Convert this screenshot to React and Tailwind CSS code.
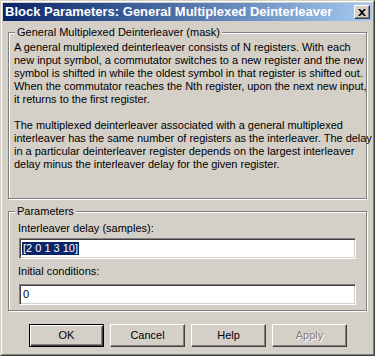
const font = { fontFamily: '"Liberation Sans", Arial, sans-serif' };

const GroupBox = ( { label, className, children } ) => (
	<div
		className={ `relative border border-[#808080] shadow-[inset_1px_1px_0_#fff,1px_1px_0_#fff] ${ className }` }
	>
		<span className="absolute -top-[7px] left-[6px] bg-[#d4d0c8] px-[2px] leading-[13px]">
			{ label }
		</span>
		{ children }
	</div>
);

const EditBox = ( { children } ) => (
	<div className="h-[21px] w-[337px] bg-white border border-t-[#808080] border-l-[#808080] border-b-white border-r-white shadow-[inset_1px_1px_0_#404040,inset_-1px_-1px_0_#d4d0c8] flex items-center pl-[2px] leading-[13px]">
		{ children }
	</div>
);

const Button = ( { children, primary, disabled } ) => (
	<button
		className={ `w-[75px] h-[23px] flex items-center justify-center bg-[#d4d0c8] ${
			primary
				? 'border border-black shadow-[inset_1px_1px_0_#fff,inset_-1px_-1px_0_#404040,inset_-2px_-2px_0_#808080]'
				: 'border border-t-white border-l-white border-b-[#404040] border-r-[#404040] shadow-[inset_-1px_-1px_0_#808080]'
		} ${ disabled ? 'text-[#808080] [text-shadow:1px_1px_0_#fff]' : 'text-black' }` }
	>
		{ children }
	</button>
);

const para1 = [
	'A general multiplexed deinterleaver consists of N registers.  With each',
	'new input symbol, a commutator switches to a new register and the new',
	'symbol is shifted in while the oldest symbol in that register is shifted out.',
	'When the commutator reaches the Nth register, upon the next new input,',
	'it returns to the first register.',
];

const para2 = [
	'The multiplexed deinterleaver associated with a general multiplexed',
	'interleaver has the same number of registers as the interleaver.  The delay',
	'in a particular deinterleaver register depends on the largest interleaver',
	'delay minus the interleaver delay for the given register.',
];

export default function App() {
	return (
		<div
			style={ font }
			className="w-[375px] h-[356px] text-[11px] text-black bg-[#d4d0c8] border border-t-[#d4d0c8] border-l-[#d4d0c8] border-b-[#404040] border-r-[#404040]"
		>
			<div className="h-full border border-t-white border-l-white border-b-[#808080] border-r-[#808080] p-[1px] flex flex-col">
				{/* title bar */}
				<div className="h-[18px] shrink-0 flex items-center justify-between pl-[2px] pr-[2px] bg-gradient-to-r from-[#0a246a] to-[#a6caf0]">
					<span className="text-white font-bold text-[13px] leading-[18px] whitespace-nowrap">
						Block Parameters: General Multiplexed Deinterleaver
					</span>
					<div className="w-[16px] h-[14px] bg-[#d4d0c8] border border-t-white border-l-white border-b-[#404040] border-r-[#404040] shadow-[inset_-1px_-1px_0_#808080] flex items-center justify-center">
						<svg width="8" height="7" viewBox="0 0 8 7" className="block">
							<path d="M0 0h2l2 2 2-2h2L5 3.5 8 7H6L4 5 2 7H0l3-3.5z" fill="#000" />
						</svg>
					</div>
				</div>

				<div className="flex flex-col px-[5px] pt-[11px]">
					<GroupBox label="General Multiplexed Deinterleaver (mask)" className="h-[167px] w-[359px]">
						<div className="pt-[8px] pl-[5px] leading-[13px] whitespace-nowrap tracking-[-0.02px]">
							{ para1.map( ( l ) => (
								<div key={ l }>{ l }</div>
							) ) }
							<div className="h-[13px]" />
							{ para2.map( ( l ) => (
								<div key={ l }>{ l }</div>
							) ) }
						</div>
					</GroupBox>

					<GroupBox label="Parameters" className="mt-[12px] h-[100px] w-[359px]">
						<div className="pt-[10px] pl-[10px] flex flex-col">
							<div className="leading-[13px] ml-[-1px]">Interleaver delay (samples):</div>
							<div className="mt-[3px]">
								<EditBox>
									<span className="bg-[#0a246a] text-white px-[1px]">[2 0 1 3 10]</span>
								</EditBox>
							</div>
							<div className="leading-[13px] mt-[6px] ml-[-1px]">Initial conditions:</div>
							<div className="mt-[6px]">
								<EditBox>
									<span className="px-[1px]">0</span>
								</EditBox>
							</div>
						</div>
					</GroupBox>

					<div className="mt-[13px] flex gap-[6px] pl-[21px]">
						<Button primary>OK</Button>
						<Button>Cancel</Button>
						<Button>Help</Button>
						<Button disabled>Apply</Button>
					</div>
				</div>
			</div>
		</div>
	);
}
